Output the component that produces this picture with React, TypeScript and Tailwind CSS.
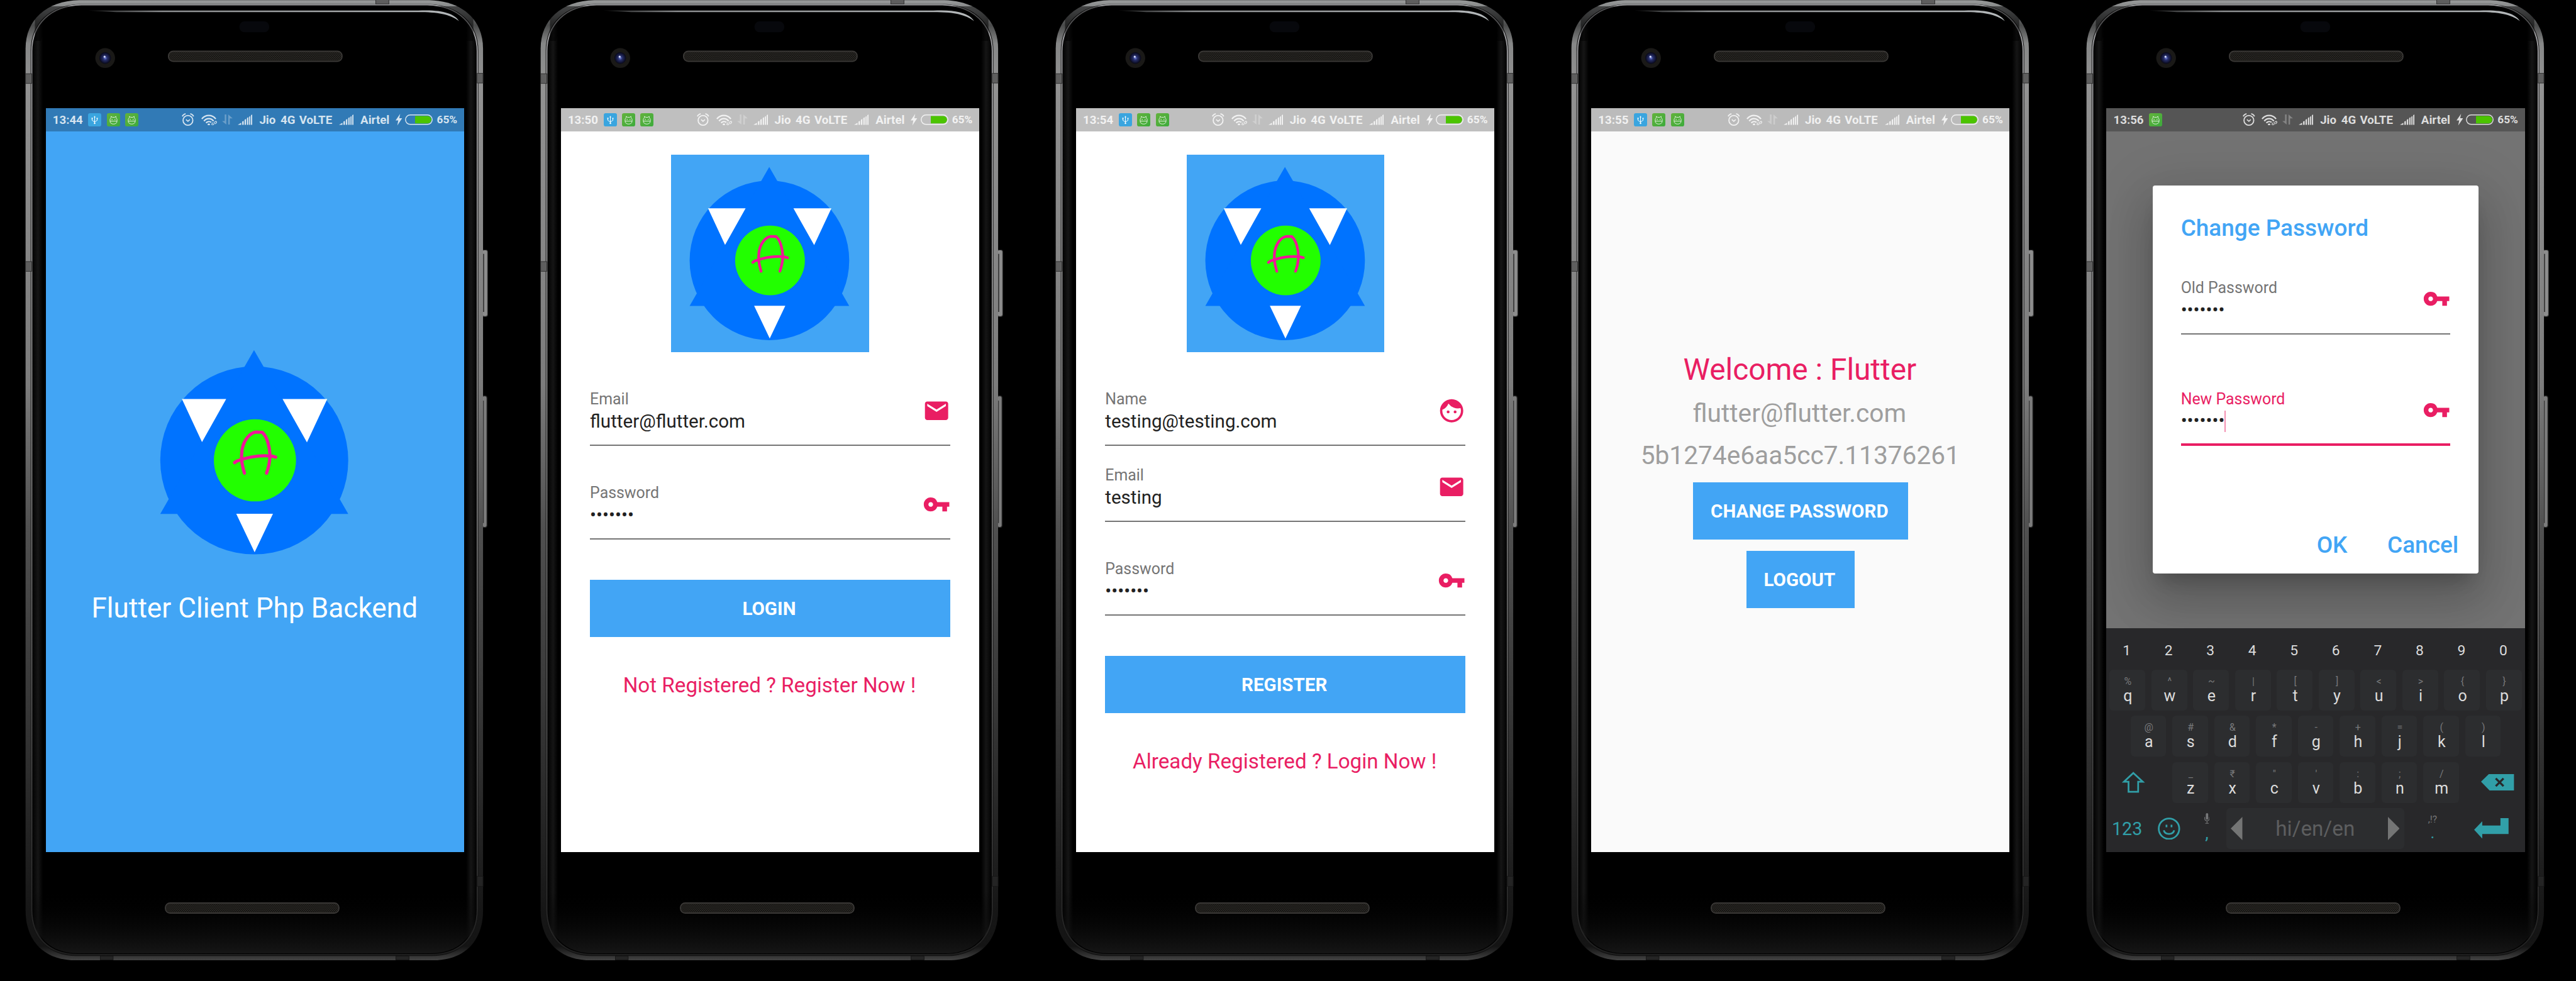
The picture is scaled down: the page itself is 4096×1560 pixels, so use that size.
import type { ReactNode } from "react";
import { MdEmail, MdFace, MdVpnKey } from "react-icons/md";

/* ---------- Device ---------- */

function DeviceBody() {
  return (
    <svg viewBox="0 0 1330 2532" className="absolute inset-0 h-full w-full" aria-hidden="true">
      <defs>
        <linearGradient id="metal" gradientUnits="userSpaceOnUse" x1="0" y1="0" x2="0" y2="2480">
          <stop offset="0" stopColor="#9a9c9c" />
          <stop offset="0.012" stopColor="#77797a" />
          <stop offset="0.026" stopColor="#4a4b4b" />
          <stop offset="0.045" stopColor="#868787" />
          <stop offset="0.09" stopColor="#929292" />
          <stop offset="0.4" stopColor="#7c7c7c" />
          <stop offset="0.55" stopColor="#505050" />
          <stop offset="0.8" stopColor="#2e2e2e" />
          <stop offset="0.95" stopColor="#161616" />
          <stop offset="0.985" stopColor="#141414" />
          <stop offset="1" stopColor="#444" />
        </linearGradient>
        <linearGradient id="rim" gradientUnits="userSpaceOnUse" x1="0" y1="0" x2="0" y2="2480">
          <stop offset="0" stopColor="#a3a3a6" />
          <stop offset="0.4" stopColor="#8a8a8a" />
          <stop offset="0.7" stopColor="#5a5a5a" />
          <stop offset="1" stopColor="#1e1e1e" />
        </linearGradient>
        <linearGradient id="glassX" x1="0" y1="0" x2="1" y2="0">
          <stop offset="0" stopColor="#000" />
          <stop offset="0.008" stopColor="#0c0c0c" />
          <stop offset="0.014" stopColor="#151515" />
          <stop offset="0.025" stopColor="#000" />
          <stop offset="0.975" stopColor="#000" />
          <stop offset="0.986" stopColor="#151515" />
          <stop offset="0.992" stopColor="#0c0c0c" />
          <stop offset="1" stopColor="#000" />
        </linearGradient>
        <linearGradient id="chin" gradientUnits="userSpaceOnUse" x1="0" y1="2300" x2="0" y2="2462">
          <stop offset="0" stopColor="#000" stopOpacity="0" />
          <stop offset="1" stopColor="#161616" />
        </linearGradient>
        <linearGradient id="glint" x1="0" y1="0" x2="1" y2="0">
          <stop offset="0" stopColor="#8c8e90" stopOpacity="0.2" />
          <stop offset="0.2" stopColor="#8c8e90" />
          <stop offset="1" stopColor="#b4b8ba" />
        </linearGradient>
        <radialGradient id="lens" cx="0.5" cy="0.5" r="0.5">
          <stop offset="0" stopColor="#6f80d8" />
          <stop offset="0.35" stopColor="#28306e" />
          <stop offset="1" stopColor="#070716" />
        </radialGradient>
        <pattern id="mesh" width="5" height="6" patternUnits="userSpaceOnUse">
          <rect width="5" height="6" fill="#12110f" />
          <rect width="2.4" height="2.4" fill="#35332f" />
          <rect x="2.5" y="3" width="2.4" height="2.4" fill="#35332f" />
        </pattern>
      </defs>

      {/* side buttons */}
      <rect x="1245" y="645" width="14" height="172" rx="5" fill="#8d8d8d" stroke="#2c2c2c" strokeWidth="2" />
      <rect x="1245" y="655" width="5" height="150" fill="#3b3b3b" />
      <rect x="1245" y="1022" width="12" height="339" rx="5" fill="#7d7d7d" stroke="#2c2c2c" strokeWidth="2" />
      <rect x="1245" y="1034" width="4" height="316" fill="#333" />

      {/* metal frame */}
      <path
        d="M66 125C66 50 120 2 205 0H1108C1193 2 1247 50 1247 125V2350C1247 2430 1198 2479 1118 2479H195C115 2479 66 2430 66 2350Z"
        fill="url(#metal)"
      />
      <path
        d="M79 130C79 60 128 12 208 10H1105C1185 12 1235 60 1235 130V2348C1235 2420 1190 2468 1114 2468H199C123 2468 79 2420 79 2348Z"
        fill="#141414"
      />
      <path
        d="M82 132C82 63 130 14 210 12H1103C1183 14 1232 63 1232 132V2348C1232 2418 1188 2464 1112 2464H201C125 2464 82 2418 82 2348Z"
        fill="url(#glassX)"
        stroke="url(#rim)"
        strokeWidth="3"
      />
      <path
        d="M86 2290V2348C86 2416 128 2461 203 2461H1110C1186 2461 1228 2416 1228 2348V2290Z"
        fill="url(#chin)"
      />
      <path d="M90 16H1222V105H1205C1190 60 1150 40 1100 38H215C165 40 120 60 105 105H90Z" fill="#000" opacity="0.5" />

      {/* antenna breaks */}
      <g fill="#5e5e5e" stroke="#2c2c2c" strokeWidth="1.500">
        <rect x="66" y="190" width="16" height="25" />
        <rect x="66" y="675" width="16" height="25" />
        <rect x="1232" y="189" width="15" height="25" />
        <rect x="970" y="-2" width="34" height="12" />
      </g>
      <g fill="#242424" stroke="#161616" strokeWidth="1.500">
        <rect x="1232" y="2262" width="15" height="26" />
        <rect x="259" y="2468" width="33" height="10" />
        <rect x="1022" y="2468" width="34" height="10" />
      </g>

      {/* upper glass glint */}
      <path
        d="M228 27H1080C1140 24 1172 34 1185 54C1160 36 1130 31 1080 31H300Z"
        fill="url(#glint)"
      />

      {/* sensor, camera, speakers */}
      <rect x="618" y="55" width="77" height="28" rx="13" fill="#07080c" />
      <circle cx="271.500" cy="149.500" r="25.500" fill="#1a1917" />
      <circle cx="271.500" cy="149.500" r="15" fill="url(#lens)" />
      <circle cx="270" cy="146" r="2.500" fill="#d8defa" />
      <rect x="435" y="132" width="448" height="26" rx="12" fill="url(#mesh)" stroke="#3a3836" strokeWidth="3" />
      <rect x="427" y="2331" width="448" height="26" rx="12" fill="url(#mesh)" stroke="#3a3836" strokeWidth="3" />
    </svg>
  );
}

/* ---------- Status bar ---------- */

function UsbBadge() {
  return (
    <svg viewBox="0 0 34 34" className="size-[21px] shrink-0">
      <rect width="34" height="34" rx="5" fill="#3aa5df" />
      <g stroke="#fff" strokeWidth="1.600" fill="none">
        <path d="M17 8V27M10.500 14V18.500L17 22.500L23.500 18.500V14" />
      </g>
      <path d="M14.500 10.500L17 7L19.500 10.500Z" fill="#fff" />
      <circle cx="17" cy="26" r="2" fill="#fff" />
      <rect x="9.200" y="11.500" width="2.800" height="4" fill="#fff" />
      <circle cx="23.500" cy="13.500" r="1.700" fill="#fff" />
    </svg>
  );
}

function BugBadge() {
  return (
    <svg viewBox="0 0 34 34" className="size-[21px] shrink-0">
      <defs>
        <linearGradient id="bug" x1="0" y1="0" x2="1" y2="1">
          <stop offset="0" stopColor="#63b23c" />
          <stop offset="1" stopColor="#3cab3c" />
        </linearGradient>
      </defs>
      <rect width="34" height="34" rx="5" fill="url(#bug)" />
      <path
        d="M8 20.500C7.500 16 8.500 13.500 10.500 12L11 8L14 10.500H20L23 8L23.500 12C25.500 13.500 26.500 16 26 20.500C26 25 22.500 28 17 28C11.500 28 8 25 8 20.500ZM8 20.500H26"
        fill="none"
        stroke="#fff"
        strokeWidth="1.300"
      />
      <circle cx="13.200" cy="16" r="1.200" fill="#fff" />
      <circle cx="20.800" cy="16" r="1.200" fill="#fff" />
    </svg>
  );
}

function SignalBars() {
  return (
    <svg viewBox="0 0 37.500 27" className="h-[16.6px] w-[23.1px] shrink-0" fill="currentColor">
      <path d="M0 27L9 21.500V27ZM11.500 27V18.500L15.500 16.500V27ZM17.800 27V14L21.500 11.500V27ZM24 27V9.500L27.500 7V27ZM29.500 27V6L32.500 4V27ZM34.300 27V2L37.500 0V27Z" />
    </svg>
  );
}

function StatusBar({ time, badges, tone }: { time: string; badges: number; tone: string }) {
  return (
    <div className={`flex h-[37px] shrink-0 items-center pl-[11px] text-[18.7px] font-bold leading-none ${tone}`}>
      <span className="w-[56.7px] pt-[1px]">{time}</span>
      <div className="flex gap-[8.4px]">
        {badges > 1 && <UsbBadge />}
        <BugBadge />
        {badges > 2 && <BugBadge />}
      </div>
      <div className="ml-auto flex items-center whitespace-nowrap">
        <svg viewBox="0 0 32 33" className="mr-[10.8px] h-[20.3px] w-[19.7px]" fill="none" stroke="currentColor">
          <circle cx="16" cy="18.500" r="12.600" strokeWidth="3" />
          <path d="M11 16.500L16 21L21 16.500" strokeWidth="2.600" />
          <path d="M1.500 8.500C3 5 6 2.500 10 1.500M30.500 8.500C29 5 26 2.500 22 1.500" strokeWidth="3" />
        </svg>
        <svg viewBox="0 0 41 29" className="mr-[7.8px] h-[17.9px] w-[25.2px]" fill="none" stroke="currentColor" strokeWidth="3.800">
          <path d="M1.500 11.500C11 -0.500 28 -0.500 37.500 11.500" />
          <path d="M7 17C14 8.500 25 8.500 32 17" />
          <path d="M12.500 22C16.500 17.500 22 17.500 26 20.500" />
          <circle cx="19.500" cy="26" r="3" fill="currentColor" stroke="none" />
          <path d="M33 21.500L36 18.500C38.500 16.500 41 19.500 39 21.500L36 24.500M34.500 22.500L31 26.500C29 28.500 26 26 28 23.500L31 21" strokeWidth="1.800" />
        </svg>
        <svg viewBox="0 0 27.500 26" className="mr-[8.8px] h-[16px] w-[17px] opacity-35" fill="currentColor">
          <path d="M7 0H11V26L0 17H7ZM16 0L27.500 10H20V26H16Z" />
        </svg>
        <SignalBars />
        <span className="ml-[11px] w-[33.5px] pt-[1px]">Jio</span>
        <span className="w-[29.8px] pt-[1px]">4G</span>
        <span className="w-[63.3px] pt-[1px]">VoLTE</span>
        <SignalBars />
        <span className="ml-[11px] w-[56.2px] pt-[1px]">Airtel</span>
        <svg viewBox="0 0 17 30" className="mr-[4.8px] h-[18.5px] w-[10.4px]" fill="currentColor">
          <path d="M12 0L0 17H7L4.500 30L17 11.500H9.500Z" />
        </svg>
        <svg viewBox="0 0 71.500 27" className="mr-[6px] h-[16.6px] w-[44px]">
          <rect x="1.200" y="1.200" width="69.100" height="24.600" rx="12.300" fill="none" stroke="currentColor" strokeWidth="2.400" />
          <path d="M26 4H58.500A9.500 9.500 0 0 1 58.500 23H26Z" fill="#4bc400" />
        </svg>
        <span className="w-[43.4px] pt-[1px] text-[17.3px]">65%</span>
      </div>
    </div>
  );
}

/* ---------- Shared pieces ---------- */

function Logo({ className }: { className: string }) {
  return (
    <svg viewBox="0 0 510 510" className={`shrink-0 bg-[#42a5f5] ${className}`}>
      <circle cx="254" cy="273" r="206" fill="#0073ff" />
      <path d="M253.500 31.500L460 390.500H48Z" fill="#0073ff" />
      <path d="M95.500 138.500H192.500L139.500 233ZM316 138.500H414L369.500 233.500ZM214.500 390H295L254.800 474.500Z" fill="#fff" />
      <circle cx="255.500" cy="273" r="90" fill="#22ff00" />
      <g fill="none" stroke="#f01598" strokeWidth="7" strokeLinecap="round" strokeLinejoin="round">
        <path d="M232.500 301C226 279 225 268 227 251C231 228 244 213 258 211L271.500 211.500C283 222 288 245 288.500 262C288 278 285 290 281 301" />
        <path d="M211 278L216 274.500C245 264 270 261 294 264L301 266" />
      </g>
    </svg>
  );
}

function Screen({
  time,
  badges,
  barTone,
  pageTone,
  children,
}: {
  time: string;
  badges: number;
  barTone: string;
  pageTone: string;
  children: ReactNode;
}) {
  return (
    <section className="relative h-[1560px] w-[819.2px] shrink-0 pl-[72.7px] pt-[172px]">
      <DeviceBody />
      <div className={`relative flex h-[1182.6px] w-[665.2px] flex-col overflow-hidden ${pageTone}`}>
        <StatusBar time={time} badges={badges} tone={barTone} />
        {children}
      </div>
    </section>
  );
}

function Field({
  label,
  value,
  icon,
  active = false,
}: {
  label: string;
  value: string;
  icon: ReactNode;
  active?: boolean;
}) {
  return (
    <div
      className={`flex h-[90px] w-full items-start justify-between ${
        active ? "border-b-4 border-[#e91e63]" : "border-b-2 border-[#757575]"
      }`}
    >
      <div className="flex flex-col whitespace-nowrap pt-[1px]">
        <span className={`text-[24.9px] leading-[29px] ${active ? "text-[#e91e63]" : "text-[#757575]"}`}>{label}</span>
        <span className="flex items-center pt-[0.8px] text-[29.56px] leading-[41.8px] text-[#212121]">
          {value}
          {active && <span className="h-[34px] w-[2px] bg-[#f48fb1]" />}
        </span>
      </div>
      <span className="mt-[11.3px] size-[44.35px] text-[44.35px] text-[#e91e63]">{icon}</span>
    </div>
  );
}

function Button({ className, children }: { className: string; children: ReactNode }) {
  return (
    <button
      className={`flex h-[90.8px] shrink-0 items-center justify-center bg-[#42a5f5] pr-[3px] pt-[3px] text-[29.56px] font-bold leading-none text-white ${className}`}
    >
      {children}
    </button>
  );
}

/* ---------- Keyboard ---------- */

function Key({ hint, letter }: { hint: string; letter: string }) {
  return (
    <div className="flex w-[66.52px] justify-center">
      <div className="flex h-[65.1px] w-[56.7px] flex-col items-center rounded-[6px] bg-[#2c2d2f] pl-[1.5px] pt-[11px]">
        <span className="h-[18.3px] text-[16px] leading-none text-[#77787a]">{hint}</span>
        <span className="text-[25px] leading-none text-[#dcdcdc]">{letter}</span>
      </div>
    </div>
  );
}

const topRow = ["%q", "^w", "~e", "|r", "[t", "]y", "<u", ">i", "{o", "}p"];
const homeRow = ["@a", "#s", "&d", "*f", "-g", "+h", "=j", "(k", ")l"];
const lastRow = ["_z", "₹x", "\"c", "'v", ":b", ";n", "/m"];

function Keyboard() {
  return (
    <div className="flex h-[356.8px] shrink-0 flex-col bg-[#28282a]">
      <div className="flex h-[66px] pt-[25.2px] text-[22.8px] leading-none text-[#dcdcdc]">
        {"1234567890".split("").map((n) => (
          <span key={n} className="w-[66.52px] pr-[2px] text-center">
            {n}
          </span>
        ))}
      </div>
      <div className="flex flex-col gap-[8.3px]">
        <div className="flex">
          {topRow.map((k) => (
            <Key key={k} hint={k[0]} letter={k[1]} />
          ))}
        </div>
        <div className="flex justify-center">
          {homeRow.map((k) => (
            <Key key={k} hint={k[0]} letter={k[1]} />
          ))}
        </div>
        <div className="flex">
          <div className="flex w-[99.8px] items-center pl-[25px]">
            <svg viewBox="0 0 59 56" className="h-[34.3px] w-[36.3px]" fill="none" stroke="#319fa8" strokeWidth="4.500">
              <path d="M29.500 3.500L54 26.500H42V52.500H17V26.500H5Z" />
            </svg>
          </div>
          {lastRow.map((k) => (
            <Key key={k} hint={k[0]} letter={k[1]} />
          ))}
          <div className="flex items-center pl-[30.6px]">
            <svg viewBox="0 0 85 42" className="h-[26px] w-[52.4px]">
              <path d="M0 19.500L20 0H85V42H22Z" fill="#319fa8" />
              <path d="M38 11L58 31M58 11L38 31" stroke="#28282a" strokeWidth="5.500" />
            </svg>
          </div>
        </div>
        <div className="flex h-[65.1px] items-center">
          <span className="w-[66.5px] pr-[1px] pt-[2px] text-center text-[28.7px] leading-none text-[#319fa8]">123</span>
          <div className="flex w-[66.5px] justify-center">
            <svg viewBox="0 0 58 58" className="size-[35.7px]" fill="none" stroke="#319fa8" strokeWidth="4.500">
              <circle cx="29" cy="29" r="26.500" />
              <path d="M15.500 33C19 45.500 39 45.500 42.500 33" />
              <path d="M22.500 18.500V25M35.500 18.500V25" />
            </svg>
          </div>
          <div className="flex h-full w-[53.2px] flex-col items-center pt-[8.5px]">
            <svg viewBox="0 0 14 28" className="h-[17.2px] w-[8.6px]" fill="none" stroke="#77787a" strokeWidth="1.800">
              <rect x="4" y="0" width="6" height="17" rx="3" fill="#77787a" stroke="none" />
              <path d="M1 10V14C1 22 13 22 13 14V10M7 20V26M2.500 26.500H11.500" />
            </svg>
            <span className="text-[28px] leading-none text-[#319fa8]">,</span>
          </div>
          <div className="ml-[4px] flex h-[65.1px] w-[283.3px] items-center justify-between rounded-[6px] bg-[#2c2d2f] px-[7.500px]">
            <svg viewBox="0 0 30 60" className="h-[37px] w-[18.500px]" fill="#747575">
              <path d="M30 0V60L0 30Z" />
            </svg>
            <span className="pt-[1px] text-[33.3px] leading-none text-[#5d5e5f]">hi/en/en</span>
            <svg viewBox="0 0 30 60" className="h-[37px] w-[18.500px]" fill="#747575">
              <path d="M0 0V60L30 30Z" />
            </svg>
          </div>
          <div className="ml-[4px] flex h-full w-[82px] flex-col items-center pt-[11px]">
            <span className="text-[15.500px] leading-none text-[#77787a]">,!?</span>
            <span className="text-[26px] leading-none text-[#319fa8]">.</span>
          </div>
          <div className="flex w-[105.6px] justify-center">
            <svg viewBox="0 0 89 53" className="h-[32.600px] w-[54.800px]" fill="#319fa8">
              <path d="M0 30L21 8V19H68V0H89V41H21V53Z" />
            </svg>
          </div>
        </div>
      </div>
    </div>
  );
}

/* ---------- Screens ---------- */

function Splash() {
  return (
    <div className="flex flex-col items-center pt-[325px]">
      <Logo className="size-[370px]" />
      <p className="mt-[40.5px] whitespace-nowrap pr-[1px] text-[44.2px] leading-none text-white">
        Flutter Client Php Backend
      </p>
    </div>
  );
}

function Login() {
  return (
    <div className="flex flex-col items-center px-[46.2px] pt-[36.6px]">
      <Logo className="size-[314.1px]" />
      <div className="mt-[59.7px] flex w-full flex-col gap-[58.9px]">
        <Field label="Email" value="flutter@flutter.com" icon={<MdEmail />} />
        <Field label="Password" value="•••••••" icon={<MdVpnKey />} />
      </div>
      <Button className="mt-[63.5px] w-full">LOGIN</Button>
      <a className="mt-[57.2px] whitespace-nowrap pr-[2px] text-[33.2px] leading-[40px] text-[#e91e63]">
        Not Registered ? Register Now !
      </a>
    </div>
  );
}

function Register() {
  return (
    <div className="flex flex-col items-center px-[46.2px] pt-[36.6px]">
      <Logo className="size-[314.1px]" />
      <div className="mt-[59.7px] flex w-full flex-col gap-[31px]">
        <Field label="Name" value="testing@testing.com" icon={<MdFace />} />
        <Field label="Email" value="testing" icon={<MdEmail />} />
      </div>
      <div className="mt-[58.9px] w-full">
        <Field label="Password" value="•••••••" icon={<MdVpnKey />} />
      </div>
      <Button className="mt-[63.5px] w-full">REGISTER</Button>
      <a className="mt-[57.2px] whitespace-nowrap pr-[2px] text-[33.2px] leading-[40px] text-[#e91e63]">
        Already Registered ? Login Now !
      </a>
    </div>
  );
}

function Profile() {
  return (
    <div className="flex flex-col items-center whitespace-nowrap pt-[351.3px]">
      <h1 className="pr-[2px] text-[47.8px] leading-[56.3px] text-[#e91e63]">Welcome : Flutter</h1>
      <p className="mt-[17.5px] pr-[3px] text-[40.65px] leading-[47.6px] text-[#9e9e9e]">flutter@flutter.com</p>
      <p className="mt-[19.3px] pr-[1px] text-[40.65px] leading-[47.6px] text-[#9e9e9e]">5b1274e6aa5cc7.11376261</p>
      <Button className="mt-[18.2px] w-[341.8px]">CHANGE PASSWORD</Button>
      <Button className="mt-[18.3px] w-[171.9px]">LOGOUT</Button>
    </div>
  );
}

function ChangePassword() {
  return (
    <>
      <div className="flex h-[789.8px] shrink-0 justify-center overflow-hidden pt-[86px]">
        <div className="flex h-[617.4px] w-[517.4px] flex-col rounded-[3.7px] bg-white px-[44.3px] pt-[50px] shadow-[0_20px_26px_-13px_rgba(0,0,0,0.2),0_44px_70px_6px_rgba(0,0,0,0.14),0_17px_85px_15px_rgba(0,0,0,0.12)]">
          <h2 className="text-[36.96px] font-medium leading-none text-[#42a5f5]">Change Password</h2>
          <div className="mt-[60px] flex flex-col gap-[86.7px]">
            <Field label="Old Password" value="•••••••" icon={<MdVpnKey />} />
            <Field label="New Password" value="•••••••" icon={<MdVpnKey />} active />
          </div>
          <div className="mt-[140px] flex whitespace-nowrap pl-[216px] text-[36.96px] font-medium leading-none text-[#42a5f5]">
            <span className="w-[112.4px] shrink-0">OK</span>
            <span>Cancel</span>
          </div>
        </div>
      </div>
      <Keyboard />
    </>
  );
}

export default function App() {
  return (
    <main className="flex h-[1560px] w-[4096px] overflow-hidden bg-black [font-family:Roboto,sans-serif]">
      <Screen time="13:44" badges={3} barTone="bg-[#317ab6] text-[#d6e4f0]" pageTone="bg-[#42a5f5]">
        <Splash />
      </Screen>
      <Screen time="13:50" badges={3} barTone="bg-[#bfbfbf] text-[#f2f2f2]" pageTone="bg-white">
        <Login />
      </Screen>
      <Screen time="13:54" badges={3} barTone="bg-[#bfbfbf] text-[#f2f2f2]" pageTone="bg-white">
        <Register />
      </Screen>
      <Screen time="13:55" badges={3} barTone="bg-[#bbbbbb] text-[#f1f1f1]" pageTone="bg-[#fafafa]">
        <Profile />
      </Screen>
      <Screen time="13:56" badges={1} barTone="bg-[#555555] text-[#dddddd]" pageTone="bg-[#737373]">
        <ChangePassword />
      </Screen>
    </main>
  );
}
